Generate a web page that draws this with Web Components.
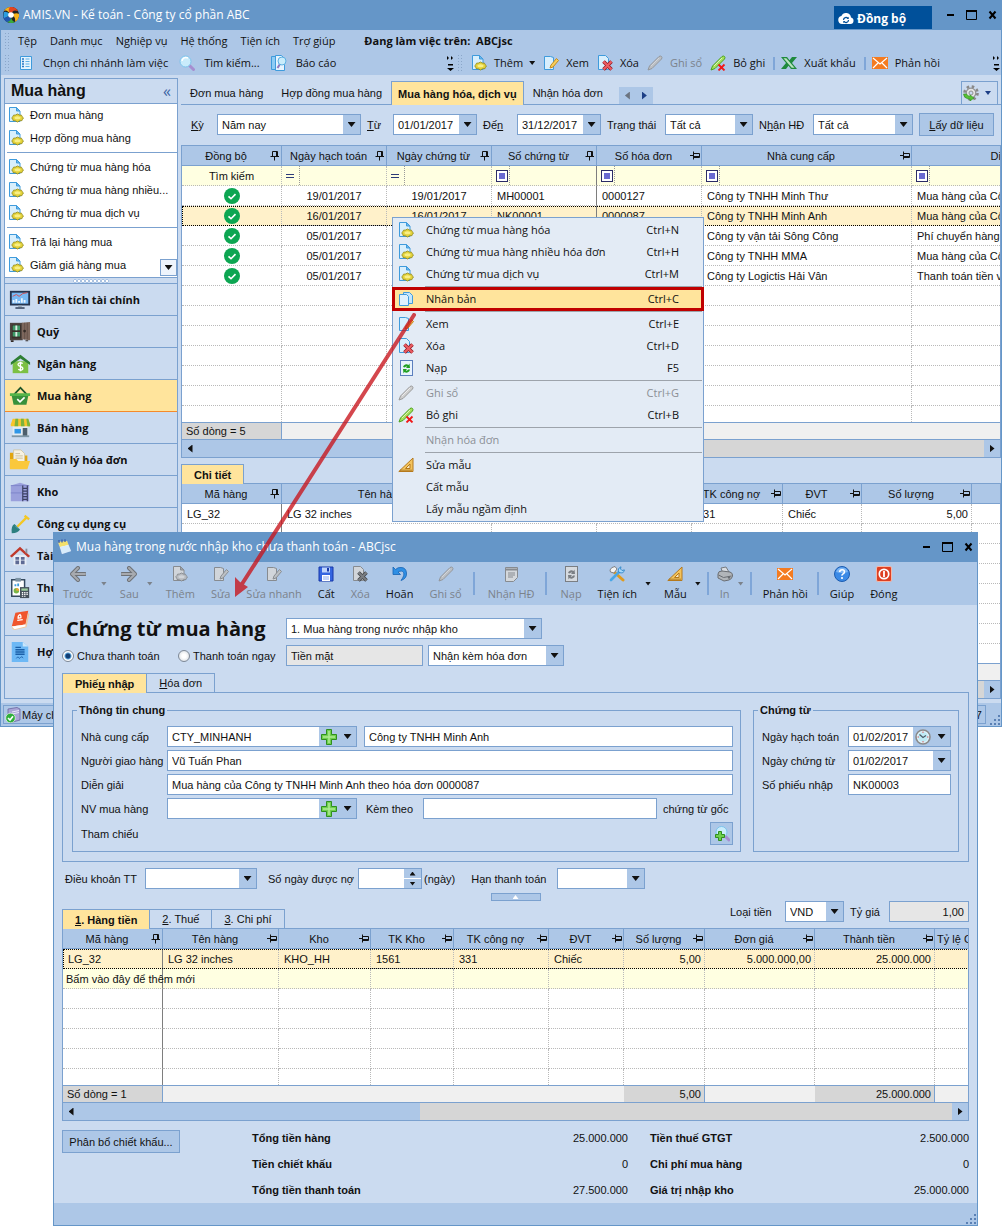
<!DOCTYPE html>
<html lang="vi">
<head>
<meta charset="utf-8">
<title>AMIS.VN - Kế toán</title>
<style>
  :root {
    --title: #6596c8; --bar: #adc7e7; --panel: #cbdbf0; --line: #7ba1cf;
    --gold: #ffe49c; --row: #fff1ca; --soft: #ffffe1; --grey: #d6d6d6; --pale: #f0f0f0;
    --sans: "Liberation Sans", Arial, sans-serif;
    --ui: "Open Sans", "Noto Sans", sans-serif;
  }
  body { margin: 0; background: #fff; color: #111; font: 11px/14px var(--sans); }
</style>
</head>
<body>
<app-desktop></app-desktop>
<script>
const BASE = `
  *, *::before, *::after { box-sizing: border-box; }
  button, input, select { font: inherit; color: inherit; margin: 0; padding: 0; border: 0; background: none; border-radius: 0; text-align: inherit; min-width: 0; }
  [hidden] { display: none !important; }
`;
class UiElement extends HTMLElement {
  connectedCallback() {
    if (this.shadowRoot) return;
    const root = this.attachShadow({ mode: 'open' });
    const t = document.createElement('template');
    t.innerHTML = `<style>${BASE}${this.styles()}</style>${this.render()}`;
    root.append(t.content.cloneNode(true));
  }
  attr(name, fallback = '') { return this.getAttribute(name) ?? fallback; }
  styles() { return ''; }
  render() { return '<slot></slot>'; }
}

/* ---------- icons ---------- */
const PENCIL = (a, b) => `<path d="M1 15l1.500-4L12 1.500q1.500-1 2.500 0t0 2.500L5 13.500z" fill="${a}" stroke="${b}"/><path d="M4 11l8-8" stroke="#fff" stroke-opacity=".6"/>`;
const ICONS = {
  logo: [16, '<circle cx="8" cy="8" r="8" fill="#222"/><path d="M8 8V0a8 8 0 0 0-7 4q3-2 7 4z" fill="#f7b21a"/><path d="M8 8Q9 2 15 4a8 8 0 0 0-8-4q-3 3 1 8z" fill="#e5451f"/><path d="M8 8q5-3 8-1a8 8 0 0 1-4 8Q13 9 8 8z" fill="#f7b21a"/><path d="M8 8q0 6 4 7a8 8 0 0 1-9-1q5 0 5-6z" fill="#3bab3a"/><path d="M8 8q-5 4-8 1a8 8 0 0 0 4 6q5-1 4-7z" fill="#2056b0"/><path d="M8 8Q4 4 1 5a8 8 0 0 0 0 6q3-1 7-3z" fill="#2d9de0"/><circle cx="8" cy="8" r="2.800" fill="#fff"/>'],
  cloud: [16, '<path d="M4 13a4 4 0 0 1-.6-7.900A5 5 0 0 1 13 6.500 3.300 3.300 0 0 1 12.500 13z" fill="#fff"/><path d="M5.500 9a2.500 2.500 0 0 1 4.500-1.500M10.500 9A2.500 2.500 0 0 1 6 10.500" fill="none" stroke="#00509a" stroke-width="1.200"/><path d="M10.700 5.800v2.200H8.500zM5.300 12.200V10h2.200z" fill="#00509a"/>'],
  list: [16, '<path d="M2.500 1.500h11v13h-11z" fill="#e6f4fe" stroke="#3f9bdc"/><path d="M4 4h2M4 6.500h2M4 9h2M4 11.500h2" stroke="#2a78c4" stroke-width="1.500"/><path d="M7.500 4h4M7.500 6.500h4M7.500 9h4M7.500 11.500h4" stroke="#5fb0e6"/>'],
  search: [16, '<path d="M10 10l4.500 4.500" stroke="#a68ed0" stroke-width="3" stroke-linecap="round"/><circle cx="6.500" cy="6.500" r="5.500" fill="#c9ecfb" stroke="#7cc3ec"/><path d="M3 6a4 4 0 0 1 6-3" stroke="#fff" stroke-width="1.500" fill="none"/>'],
  report: [16, '<path d="M.5 1.500h4v13h-4z" fill="#8fccf4" stroke="#3f9bdc"/><path d="M4.500.5h6l3 3v12h-9z" fill="#e6f4fe" stroke="#3f9bdc"/><path d="M9 9l-2.500 4" stroke="#8f79c0" stroke-width="2"/><circle cx="11" cy="6" r="4" fill="#c9ecfb" stroke="#5eb0e2"/>'],
  doc: [16, '<path d="M1.500.5h7l3.500 3.500v10.500h-10.500z" fill="#d8effd" stroke="#3f9bdc"/><path d="M8.500.5v3.500h3.500z" fill="#6cb8ee" stroke="#3f9bdc"/><path d="M9.500 7l1.800 1 2.200.2.500 1.300 1.500 1.400-1 1.400-.5 1.300-2.400.2-2.100 1.200-2.200-1.200-2.300-.3-.3-1.300-1-1.400 1.300-1.300.5-1.300 2-.2z" fill="#e3d23a" stroke="#8f8616" stroke-width=".8"/><ellipse cx="9.500" cy="10.800" rx="3" ry="1.500" fill="#f8ef86"/>'],
  edit: [16, '<path d="M1.500 1.500h6l3 1v12h-9z" fill="#d8effd" stroke="#3f9bdc"/><path d="M8 10l-1 3 3-1 5.500-6.500-2-2z" fill="#f7cf5b" stroke="#c48a1c"/>'],
  del: [16, '<path d="M1.500.5h7l3 3v11h-10z" fill="#d8effd" stroke="#3f9bdc"/><path d="M6.500 6.500l8 8M14.500 6.500l-8 8" stroke="#8f1720" stroke-width="3.600"/><path d="M6.500 6.500l8 8M14.500 6.500l-8 8" stroke="#ec5d62" stroke-width="2.200"/>'],
  pencil: [16, PENCIL('#cfcfcf', '#9a9a9a')],
  unpost: [16, PENCIL('#a5e05a', '#4ba31e') + '<path d="M8.500 9.500l6 6M14.500 9.500l-6 6" stroke="#f01818" stroke-width="1.800"/>'],
  excel: [16, '<path d="M0 2h6l2.500 3.200L11 2h5l-5 6 5 6h-6l-2.500-3.200L5 14H0l5-6z" fill="#1f8a3d"/><path d="M2.500 3.200h2.800l8.200 9.600h-2.800z" fill="#b9e4bf"/>'],
  mail: [16, '<rect y="2" width="16" height="12" fill="#f47b20"/><path d="M1 3l7 6 7-6M1 13l5-5M15 13l-5-5" fill="none" stroke="#fff" stroke-width="1.200"/>'],
  gear: [16, '<circle cx="8" cy="8" r="6.500" fill="none" stroke="#888" stroke-width="2.600" stroke-dasharray="2.500 2.600"/><circle cx="8" cy="8" r="4.800" fill="#e4e4e4" stroke="#909090" stroke-width="1.200"/><circle cx="8" cy="8" r="2" fill="#cbdbf0" stroke="#909090"/><path d="M.5 9q1 5 6.500 5v2l4-3-4-3v1.500Q4.500 11 3.500 9z" fill="#55c234" stroke="#2f8f1e" stroke-width=".6"/>'],
  copy: [16, '<path d="M5.500 1.500h6l3 3v8h-9z" fill="#c4e6fb" stroke="#3f9bdc"/><path d="M1.500 3.500h7l2 2v9h-9z" fill="#dff1fd" stroke="#3f9bdc"/>'],
  refresh: [16, '<rect x="2.500" y=".5" width="12" height="15" fill="#e9f3fd" stroke="#5c7fbe"/><path d="M5 7a3.500 3.500 0 0 1 5.500-2l1-1.500.5 4.500H8l1.200-1.500Q7.500 6 7 7.500zM12 9.500a3.500 3.500 0 0 1-5.500 2.500l-1 1.500L5 9h4l-1.200 1.500q1.700.5 2.200-1z" fill="#22a022"/>'],
  ruler: [16, '<path d="M.8 14.500h14.200V1z" fill="#f3c35c" stroke="#b5791c"/><path d="M7.500 11.500H12V7z" fill="#f7e8c4" stroke="#b5791c"/><path d="M3 14v-1.500M5 14v-1.500M7 14v-1.500M9 14v-1.500M11 14v-1.500M13 14v-1.500" stroke="#7d4b08" stroke-width=".8"/>'],
  left: [16, '<path d="M8 2L2 8l6 6M2.500 8H15" fill="none" stroke="#6d6d6d" stroke-width="4" stroke-linecap="round" stroke-linejoin="round"/><path d="M8 2L2 8l6 6M2.500 8H15" fill="none" stroke="#b4b4b4" stroke-width="2" stroke-linecap="round"/>'],
  right: [16, '<path d="M8 2l6 6-6 6M13.500 8H1" fill="none" stroke="#6d6d6d" stroke-width="4" stroke-linecap="round" stroke-linejoin="round"/><path d="M8 2l6 6-6 6M13.500 8H1" fill="none" stroke="#b4b4b4" stroke-width="2" stroke-linecap="round"/>'],
  save: [16, '<path d="M1 1h14v14H1z" fill="#3465e0" stroke="#1637a8"/><path d="M4 1.500h8v5H4z" fill="#bfd4fb"/><path d="M4 9h8v6H4z" fill="#fff"/><path d="M9 2h2v3.500H9z" fill="#1637a8"/><path d="M5 11h6M5 13h6" stroke="#8aa9f0"/>'],
  undo: [16, '<path d="M1 1v7.500h7.500L6 6q4-2 5.500.5T9 14.500q6-2 5.500-7.500T9 1.500q-3-.5-5.500 2z" fill="#2f8fe4" stroke="#1763b4" stroke-width=".8"/>'],
  lines: [16, '<path d="M2.500 1.500h12v10l-4 4h-8z" fill="#dff1fd" stroke="#3f9bdc"/><path d="M3 3.500h11" stroke="#3f9bdc" stroke-width="2"/><path d="M5 7h7M5 9h7M5 11h5" stroke="#3f9bdc"/>'],
  tools: [16, '<path d="M4 5l10 9" stroke="#e09b1e" stroke-width="3" stroke-linecap="round"/><path d="M1 4q1-3 5-3.500L8 3 5 7 1.500 6z" fill="#f4f4f4" stroke="#777" stroke-width=".9"/><path d="M2 14L10 6" stroke="#4aa7e6" stroke-width="2.600" stroke-linecap="round"/><path d="M10 6.500Q8 2.500 12 .8L11.500 3 13 4.500l2.400-.6Q15 8 10 6.500z" fill="#a5d8fb" stroke="#2f86c8" stroke-width=".9"/>'],
  printer: [16, '<path d="M4 2l5-1 3 5-6 2z" fill="#f3f3f3" stroke="#777"/><path d="M1 8q0-3 4-3l8 1q3 1 2.500 4T12 14l-5 1-6-3z" fill="#c2c2c2" stroke="#666"/><path d="M1.500 9l5 2.500 8-1.500" fill="none" stroke="#666"/><circle cx="12" cy="11.500" r="1.200" fill="#666"/>'],
  help: [16, '<circle cx="8" cy="8" r="7.500" fill="#3b8ae6" stroke="#1c5cb0"/><path d="M2 6a6.300 6.300 0 0 1 12 0q-6 2-12 0z" fill="#7db6f4"/><path d="M5.700 6q0-2.300 2.400-2.300T10.400 6q0 1.200-1.300 1.900T8 9.600" fill="none" stroke="#fff" stroke-width="1.600"/><circle cx="8" cy="12" r="1.100" fill="#fff"/>'],
  power: [16, '<rect x=".5" y=".5" width="15" height="15" rx="1.500" fill="#dd3f22" stroke="#f3b8a8"/><circle cx="8" cy="8" r="4.700" fill="none" stroke="#fff" stroke-width="1.700"/><path d="M8 5v6" stroke="#fff" stroke-width="1.800"/>'],
  plus: [16, '<path d="M5.500.5h5v5h5v5h-5v5h-5v-5h-5v-5h5z" fill="#6fcf4e" stroke="#2f8f1e"/><path d="M8 2v12M2 8h12" stroke="#b0ec94" stroke-width="1.500"/>'],
  clock: [16, '<circle cx="8" cy="8" r="7" fill="#dff3fb" stroke="#8a8a8a" stroke-width="1.600"/><circle cx="8" cy="8" r="5" fill="#bfeaf5"/><path d="M4.500 5.500L8 8.500l3-2" fill="none" stroke="#4a5a66" stroke-width="1.200"/><path d="M8 2.600v1.200M8 12.200v1.200M2.600 8h1.200M12.200 8h1.200" stroke="#e03c3c"/>'],
  find: [16, '<path d="M11 10l4 4" stroke="#a68ed0" stroke-width="3" stroke-linecap="round"/><circle cx="7.500" cy="6" r="5.500" fill="#c9ecfb" stroke="#7cc3ec"/><path d="M4.500 5.500h3v3h3v3h-3v3h-3v-3h-3v-3h3z" fill="#6fcf4e" stroke="#2f8f1e"/>'],
  tick: [16, '<circle cx="8" cy="8" r="8" fill="#0da652"/><path d="M4.500 8.300l2.500 2.400 4.500-4.600" fill="none" stroke="#fff" stroke-width="1.600"/>'],
  note: [16, '<path d="M2 3l9-1 4 10-9 3z" fill="#fff" stroke="#7d9ccc" stroke-width=".7"/><path d="M2 3l9-1 1.500 4L4 8z" fill="#f3e06c"/><path d="M4 8l8.500-2 2.500 6-9 3z" fill="#d9ecfb"/><path d="M3 4V1M6 3.500V.5M9 3V.3" stroke="#3358a8" stroke-width="1.200"/>'],
  server: [16, '<path d="M3 2l9-1.500 3 1.500v11l-9 2.500-3-2z" fill="#a9a4d6" stroke="#6a66a0" stroke-width=".8"/><path d="M7 5l7-1.500M7 7l7-1.500" stroke="#e9e7fa"/><circle cx="5.500" cy="11" r="4.800" fill="#2fae3b" stroke="#fff" stroke-width=".6"/><path d="M3 11l2 2 3-3.800" fill="none" stroke="#fff" stroke-width="1.600"/>'],
  pinv: [10, '<path d="M2.500.5h5v5h-5zM.5 5.500h8.500M4.500 5.500V9.500" fill="none" stroke="#111"/><path d="M6.500 1v4" stroke="#111"/>'],
  pinh: [10, '<path d="M3.500 2.500h6v4h-6zM3.500 .5v8M0 4.500h3.500" fill="none" stroke="#111"/><path d="M4 5.500h5" stroke="#111"/>'],
  grip: [12, '<path d="M9 1h2v2H9zM5 5h2v2H5zM9 5h2v2H9zM1 9h2v2H1zM5 9h2v2H5zM9 9h2v2H9z" fill="#5a80b4"/>'],
  monitor: [24, '<rect x="1" y="2" width="22" height="16" fill="#25344f"/><rect x="3" y="4" width="18" height="12" fill="#79b9f4"/><path d="M4 8l4-2 3 2 4-3 5-1" fill="none" stroke="#d54b4b"/><path d="M4 15v-3h2v3zM7 15v-4h2v4zM10 15v-2h2v2zM13 15v-5h2v5zM16 15v-3h2v3z" fill="#e9f4fd"/><path d="M10 18h4v2h-4z" fill="#9aa8b5"/><path d="M7 20h10v1.500H7z" fill="#25344f"/>'],
  safe: [24, '<path d="M1 2h14v19H1z" fill="#4c4440"/><path d="M3 4h10v15H3z" fill="#3b302b"/><path d="M4 5h8v5H4zM4 12h8v5H4z" fill="#3f9a68"/><path d="M7 5h2v5H7zM7 12h2v5H7z" fill="#dfeee5"/><path d="M14 2l9-1v20l-9-1z" fill="#7d675d"/><path d="M17 2v18M20 2v18" stroke="#66524a"/><circle cx="17" cy="11" r="1.500" fill="#332a26"/><path d="M2 21h3v2H2zM18 21h3v1h-3z" fill="#332a26"/>'],
  bank: [24, '<path d="M4 9h17v13H4z" fill="#7cc043"/><path d="M2 10l10.500-8L23 10v3l-10.500-7L2 13z" fill="#2e7f35"/><path d="M15 11.500q-2.500-1.600-4.300-.3t.3 2.900q2.400 1 3.400 1.500 1.500 1.400-.3 2.700-1.900.9-4-.6M12.500 9.500v10.500" fill="none" stroke="#fff" stroke-width="1.500"/>'],
  basket: [24, '<path d="M6 10l6.500-7L19 10" fill="none" stroke="#1d5428" stroke-width="2"/><path d="M1 9h22v3H1z" fill="#55b54a"/><path d="M3 12h18l-2 9.500H5z" fill="#38913c"/><path d="M9 15.500l3 2.800 5-4.800" fill="none" stroke="#fff" stroke-width="1.800"/>'],
  shop: [24, '<path d="M4 9h17v12H4z" fill="#e3ecf2"/><path d="M4 2h17l2 6v2H2V8z" fill="#f8c52c"/><path d="M7 2h3v8H6zM13 2h3l1 8h-4zM19 2h2l2 6v2h-3z" fill="#7cb33c"/><path d="M6 13h7v5H6z" fill="#2f97e8"/><path d="M15 12h5v9h-5z" fill="#4d5f6d"/><path d="M3 20h19v2H3z" fill="#7e96a6"/>'],
  folder: [24, '<path d="M1 4h6l2 3h11v14H1z" fill="#e2a60f"/><path d="M5 1h8l4 4v9H5z" fill="#f7f2e2" stroke="#d3c8a4"/><path d="M7 5h5M7 7.500h8M7 10h8" stroke="#c8bd9a"/><path d="M1 22V11h7l2 2h13l-3 9z" fill="#fac83c"/>'],
  depot: [24, '<path d="M2 5l10-3 10 3v17H2z" fill="#9aa0dc"/><path d="M2 5h20M2 13h13" stroke="#7d84c8"/><path d="M15 5v17M20 5v17M15 8h5M15 11h5M15 14h5M15 17h5M15 20h5" stroke="#3c4164" stroke-width="1.300"/>'],
  shovel: [24, '<path d="M9 15L19 5" stroke="#f4c724" stroke-width="2.500"/><path d="M17 3l5 4" stroke="#f4c724" stroke-width="2.500"/><path d="M6 12l6 6q-2 4-9 4-1-8 3-10z" fill="#2c7f80"/><path d="M7 14l3 3" stroke="#6fb6b4"/>'],
  house: [24, '<path d="M5 11h14v11H5z" fill="#e9eef6"/><path d="M12 2l11 10-2 1.500L12 5.500 3 13.500 1 12z" fill="#c0392b"/><path d="M18 4h2v5h-2z" fill="#8b8f9f"/><path d="M7 13h4v3H7zM7 17h4v4H7zM13 13h4v3h-4zM13 17h4v4h-4z" fill="#5d6a94"/>'],
  calc: [24, '<path d="M3 3h14v18H3z" fill="#fff" stroke="#34495e" stroke-width="1.600"/><path d="M7 1h6v4H7z" fill="#7c92a3"/><circle cx="8" cy="15" r="3" fill="#7ab648"/><path d="M8 12v3h3a3 3 0 0 0-3-3z" fill="#f3a536"/><path d="M6 8h2v2H6zM9 7h2v3H9z" fill="#3f9bdc"/><path d="M12 11h10v12H12z" fill="#46515c"/><path d="M13.500 12.500h7v2.500h-7z" fill="#9fd0a0"/><path d="M14 17h1.500M16.500 17H18M19 17h1.500M14 19h1.500M16.500 19H18M19 19h1.500M14 21h1.500M16.500 21H18" stroke="#fff" stroke-width="1.300"/>'],
  book: [24, '<path d="M7 4l14-2-3 15-15 2z" fill="#f0562d"/><path d="M3 19l15-2 3-13 1 2-3 14-13 3q-3-1-3-4z" fill="#f5c79a"/><path d="M3 19l15-2v2L6 22z" fill="#fff"/><path d="M9 12.500l6-1M10 10q-.5-3 2-4 1.500 1.500 1 3.500z" stroke="#fff" fill="none" stroke-width="1.400"/>'],
  contract: [24, '<path d="M3 1h12l6 5v17H3z" fill="#6db8f5"/><path d="M15 1v5h6z" fill="#c9e6fc"/><path d="M7 7h6M7 9.500h10M7 12h10M7 14.500h10" stroke="#1b5fa8" stroke-width="1.500"/><path d="M8 19q2-3 2.500-1t2 0 3 .5" fill="none" stroke="#1b5fa8"/>'],
};
customElements.define('app-icon', class extends UiElement {
  styles() {
    const s = this.attr('size', '16');
    return `:host{display:block;flex:none;width:${s}px;height:${s}px} :host([muted]){filter:grayscale(1) brightness(.92);opacity:.85} svg{display:block;width:100%;height:100%}`;
  }
  render() {
    const [box, art] = ICONS[this.attr('name')];
    return `<svg viewBox="0 0 ${box} ${box}" aria-hidden="true">${art}</svg>`;
  }
});
customElements.define('drop-caret', class extends UiElement {
  styles() {
    return `:host{display:block;flex:none;width:8px;height:5px;background:currentColor;clip-path:polygon(0 0,100% 0,50% 100%)}
      :host([dir=left]){width:5px;height:8px;clip-path:polygon(100% 0,100% 100%,0 50%)}
      :host([dir=right]){width:5px;height:8px;clip-path:polygon(0 0,0 100%,100% 50%)}
      :host([small]){width:6px;height:4px}
      :host([dir=up]){clip-path:polygon(0 100%,100% 100%,50% 0)}`;
  }
  render() { return ''; }
});

/* ---------- window frame ---------- */
customElements.define('app-window', class extends UiElement {
  styles() {
    return `:host{display:flex;flex-direction:column;background:var(--panel);border:1px solid var(--title);border-top:0}
      header{display:flex;align-items:center;height:30px;background:var(--title);color:#fff;font:12px/16px var(--ui);padding:0 3px 0 2px}
      h2{font:inherit;margin:0 auto 0 4px;white-space:nowrap}
      .ctl{display:flex;align-items:center;gap:10px;color:#000}
      .ctl button{width:11px;height:12px;display:flex}
      svg{display:block}`;
  }
  render() {
    return `<header><app-icon name="${this.attr('icon')}"></app-icon><h2>${this.attr('heading')}</h2><slot name="action"></slot>
      <div class="ctl">
        <button aria-label="Thu nhỏ"><svg width="11" height="12"><path d="M2 5h7v2H2z"/></svg></button>
        <button aria-label="Phóng to"><svg width="11" height="12"><path d="M.5 1.500h10v9H.5z" fill="none" stroke="#000"/><path d="M0 1h11v2H0z"/></svg></button>
        <button aria-label="Đóng"><svg width="11" height="12"><path d="M2.500 2.500l6 7M8.500 2.500l-6 7" stroke="#000" stroke-width="2"/></svg></button>
      </div></header><slot></slot>`;
  }
});
customElements.define('sync-button', class extends UiElement {
  styles() { return `:host{display:block;margin:6px 13px 0 0;align-self:flex-start} button{display:flex;align-items:center;gap:3px;width:98px;height:23px;padding:2px 4px 0;background:#00509a;color:#fff;font:bold 12px/16px var(--ui);white-space:nowrap}`; }
  render() { return `<button><app-icon name="cloud"></app-icon>Đồng bộ</button>`; }
});

/* ---------- toolbars ---------- */
customElements.define('tool-button', class extends UiElement {
  styles() {
    return `:host{display:flex;align-items:center}
      button{display:flex;align-items:center;gap:var(--icon-gap,7px);font:11px/16px var(--ui);white-space:nowrap}
      drop-caret{margin-left:6px}
      :host([disabled]){color:#7b828b}
      :host([stacked]) button{flex-direction:column;gap:4px;padding:0 8px}
      :host([stacked]) app-icon{margin:0 -4px}
      :host([stacked]) drop-caret{margin:0 5px 0 0}`;
  }
  render() {
    const off = this.hasAttribute('disabled');
    return `<button ${off ? 'disabled' : ''}><app-icon name="${this.attr('icon')}" ${off ? 'muted' : ''}></app-icon><slot></slot></button>${this.hasAttribute('menu') ? '<drop-caret small></drop-caret>' : ''}`;
  }
});
customElements.define('tool-sep', class extends UiElement {
  styles() { return `:host{display:block;width:2px;height:13px;background:#7fa6d8} :host([tall]){height:23px;margin:0 5px 0 3px} :host([tight]){height:23px;margin:0 3px 0 1px}`; }
  render() { return ''; }
});
customElements.define('bar-grip', class extends UiElement {
  styles() { return `:host{display:block;width:6px;height:18px;background:radial-gradient(circle,#8aa6c9 1px,transparent 1px) 0 0/3px 3px}`; }
  render() { return ''; }
});
customElements.define('bar-more', class extends UiElement {
  styles() { return `button{display:block}svg{display:block}`; }
  render() { return `<button aria-label="Thêm nút"><svg width="8" height="18"><path d="M1 2l2 2-2 2zM5 2l2 2-2 2zM2 10h5v1.500H2zM1 14h7l-3.500 3z"/></svg></button>`; }
});
customElements.define('main-menu', class extends UiElement {
  styles() {
    return `:host{display:block;background:var(--bar);font:11px/16px var(--ui)}
      nav{display:flex;align-items:center;height:22px;padding-left:3px}
      nav a{color:inherit;text-decoration:none;white-space:nowrap;margin-left:13px}
      bar-grip + a{margin-left:8px}
      b{margin-left:29px;white-space:pre}
      .row{display:flex;align-items:center;height:22px;padding-bottom:1px;box-sizing:content-box}
      .part{display:flex;align-items:center;gap:8px;padding-left:3px}
      .part:first-child{flex:0 0 453px;gap:11px;--icon-gap:9px} .part:first-child bar-grip{margin-right:-3px}
      .part:last-child{flex:1}
      .push{margin-left:auto} .part:last-child .push{margin-right:1px}
      tool-sep{margin-right:-2px}`;
  }
  render() {
    return `<nav><bar-grip></bar-grip>${['Tệp', 'Danh mục', 'Nghiệp vụ', 'Hệ thống', 'Tiện ích', 'Trợ giúp'].map(t => `<a href="#">${t}</a>`).join('')}<b>Đang làm việc trên:  ABCjsc</b></nav>
      <div class="row"><div class="part"><bar-grip></bar-grip>
        <tool-button icon="list">Chọn chi nhánh làm việc</tool-button><tool-button icon="search">Tìm kiếm...</tool-button><tool-button icon="report">Báo cáo</tool-button><bar-more class="push"></bar-more></div>
      <div class="part"><bar-grip></bar-grip>
        <tool-button icon="doc" menu>Thêm</tool-button><tool-button icon="edit">Xem</tool-button><tool-button icon="del">Xóa</tool-button><tool-button icon="pencil" disabled>Ghi sổ</tool-button><tool-button icon="unpost">Bỏ ghi</tool-button><tool-sep></tool-sep>
        <tool-button icon="excel">Xuất khẩu</tool-button><tool-sep></tool-sep><tool-button icon="mail">Phản hồi</tool-button><bar-more class="push"></bar-more></div></div>`;
  }
});

/* ---------- sidebar ---------- */
customElements.define('side-bar', class extends UiElement {
  styles() {
    return `:host{display:flex;flex-direction:column;width:174px;flex:none;border:1px solid var(--line)}
      header{display:flex;align-items:center;justify-content:space-between;height:25px;padding:0 6px;border-bottom:1px solid var(--line)}
      h1{font:bold 16px/20px var(--sans);margin:0}
      header button{font:16px/16px var(--ui);color:#3d66a5;height:18px}
      .list{position:relative;background:#fff;border-bottom:1px solid var(--line)}
      .list a{display:flex;align-items:center;gap:6px;height:23px;padding:0 0 1px 3px;color:inherit;text-decoration:none;white-space:nowrap}
      hr{margin:2px 0 3px 2px;border:0;border-top:1px solid var(--line)}
      .more{position:absolute;right:0;bottom:1px;width:17px;height:17px;display:grid;place-items:center;background:#eef4fc;border:1px solid var(--line)}
      .split{height:6px;border-bottom:1px solid var(--line);background:radial-gradient(circle,#fff 1px,#7ba1cf 1px,transparent 2px) center/4px 4px repeat-x content-box;padding:0 68px}
      .mods a{display:flex;align-items:center;gap:6px;height:32px;padding-left:4px;border-bottom:1px solid var(--line);color:inherit;text-decoration:none;font:bold 11px/16px var(--ui);white-space:nowrap}
      .mods a.on{background:var(--gold);border-bottom-color:#f58a2c}`;
  }
  render() {
    const link = t => t ? `<a href="#"><app-icon name="doc"></app-icon>${t}</a>` : '<hr>';
    const mods = [['monitor', 'Phân tích tài chính'], ['safe', 'Quỹ'], ['bank', 'Ngân hàng'], ['basket', 'Mua hàng'], ['shop', 'Bán hàng'], ['folder', 'Quản lý hóa đơn'], ['depot', 'Kho'], ['shovel', 'Công cụ dụng cụ'], ['house', 'Tài sản'], ['calc', 'Thuế'], ['book', 'Tổng'], ['contract', 'Hợp']];
    return `<header><h1>Mua hàng</h1><button aria-label="Thu gọn">«</button></header>
      <div class="list">${['Đơn mua hàng', 'Hợp đồng mua hàng', '', 'Chứng từ mua hàng hóa', 'Chứng từ mua hàng nhiều...', 'Chứng từ mua dịch vụ', '', 'Trả lại hàng mua', 'Giảm giá hàng mua'].map(link).join('')}
        <button class="more" aria-label="Cuộn xuống"><drop-caret></drop-caret></button></div>
      <div class="split"></div>
      <nav class="mods">${mods.map(([i, t]) => `<a href="#" class="${t === 'Mua hàng' ? 'on' : ''}"><app-icon name="${i}" size="22"></app-icon>${t}</a>`).join('')}</nav>`;
  }
});

/* ---------- tabs ---------- */
customElements.define('tab-strip', class extends UiElement {
  styles() {
    return `:host{display:flex;position:relative;z-index:1;margin-bottom:-1px}
      :host([plain]){margin:0;border-bottom:1px solid var(--line)}`;
  }
});
customElements.define('tab-item', class extends UiElement {
  styles() {
    return `:host{display:block}
      button{display:block;height:20px;padding:0 12px;border:1px solid var(--line);border-left:0;background:var(--panel);white-space:nowrap}
      :host([selected]) button{background:var(--gold);border-left:1px solid var(--line);border-bottom:0;font-weight:bold}
      :host([plain]) button{height:23px;border:0;padding:0 9px}
      :host([plain][selected]){margin-bottom:-1px}
      :host([plain][selected]) button{height:24px;border:1px solid var(--line);border-bottom:0;padding:0 6px}`;
  }
  render() { return `<button role="tab" aria-selected="${this.hasAttribute('selected')}"><slot></slot></button>`; }
});

/* ---------- form controls ---------- */
customElements.define('form-field', class extends UiElement {
  styles() {
    return `:host{display:flex;align-items:center;min-width:0}
      label{flex:0 0 var(--label,auto);white-space:nowrap}
      .box{display:flex;align-items:stretch;flex:1 0 0;height:21px;min-width:0;border:1px solid var(--line);background:#fff}
      :host([width]) .box{flex:0 0 ${this.attr('width', '100')}px}
      .box.off{background:#e6e6e6}
      input{flex:1;width:0;padding:0 4px}
      .num input{text-align:right}
      .pick{display:grid;flex:1}
      .pick > *{grid-area:1/1}
      select{appearance:none;width:100%;padding:0 20px 0 4px;outline:0}
      .pick i{justify-self:end;width:17px;background:var(--bar);display:grid;place-items:center;pointer-events:none}
      .box > button{width:17px;background:var(--bar);display:grid;place-items:center;flex:none}
      .box > button.wide{width:20px}
      .spin{display:flex;flex-direction:column;width:17px;gap:1px}
      .spin button{flex:1;background:var(--bar);display:grid;place-items:center}`;
  }
  render() {
    const kind = this.attr('kind', 'text'), v = this.attr('value'), name = this.attr('name');
    const input = `<input id="f" value="${v}" ${name ? `aria-label="${name}"` : ''} ${this.hasAttribute('off') ? 'readonly' : ''}>`;
    const drop = '<button aria-label="Mở danh sách"><drop-caret></drop-caret></button>';
    const inner = {
      text: input,
      select: `<span class="pick"><select id="f" ${name ? `aria-label="${name}"` : ''}><option>${v}</option></select><i><drop-caret></drop-caret></i></span>`,
      date: input + drop,
      stamp: input + '<button class="wide" aria-label="Giờ"><app-icon name="clock"></app-icon></button>' + drop,
      lookup: input + '<button class="wide" aria-label="Thêm mới"><app-icon name="plus"></app-icon></button>' + drop,
      spin: input + '<span class="spin"><button aria-label="Tăng"><drop-caret dir="up" small></drop-caret></button><button aria-label="Giảm"><drop-caret small></drop-caret></button></span>',
    }[kind];
    const cls = (this.hasAttribute('off') ? ' off' : '') + (this.hasAttribute('num') ? ' num' : '');
    return `${name ? '' : '<label for="f"><slot></slot></label>'}<div class="box${cls}">${inner}</div>`;
  }
});
customElements.define('push-button', class extends UiElement {
  styles() { return `:host{display:block} button{display:grid;place-items:center;height:23px;min-width:23px;padding:0 6px;width:100%;border:1px solid var(--line);background:var(--bar);white-space:nowrap} :host([square]) button{padding:0}`; }
  render() { return `<button ${this.attr('name') ? `aria-label="${this.attr('name')}"` : ''}><slot></slot></button>`; }
});
customElements.define('group-box', class extends UiElement {
  styles() {
    return `:host{display:flex;min-width:0}
      fieldset{flex:1;min-width:0;margin:0;border:1px solid var(--line);padding:9px 7px 6px 8px}
      legend{font-weight:bold;line-height:14px;margin-left:-4px;padding:0 2px}
      .rows{display:grid;gap:3px;--label:86px}`;
  }
  render() { return `<fieldset><legend>${this.attr('heading')}</legend><div class="rows"><slot></slot></div></fieldset>`; }
});

/* ---------- data grid ---------- */
customElements.define('data-grid', class extends UiElement {
  styles() {
    return `:host{display:block;border:1px solid var(--line);background:#fff;min-width:0}
      .view{overflow:hidden}
      table{table-layout:fixed;border-collapse:separate;border-spacing:0;width:max(100%,${this.total}px)}
      th,td{padding:0;height:20px;white-space:nowrap;font-weight:normal;line-height:14px}
      th{background:var(--bar);border-right:1px solid var(--line);border-bottom:1px solid var(--line)}
      .h{display:flex;align-items:center;padding:0 1px 0 0} .h span{flex:1;text-align:center;overflow:hidden} .h.start span{text-align:left;padding-left:2px}
      tbody td{border-right:1px dotted #b9b9b9;border-bottom:1px dotted #b9b9b9}
      tbody td.solid{border-right:1px solid #7e7e7e}
      td.l{text-align:left;padding-left:5px} td.r{text-align:right;padding-right:3px} td.c{text-align:center}
      td.c app-icon{margin:0 auto}
      tr.soft{background:var(--soft)} tr.soft td.l{padding-left:3px}
      tr.on{background:var(--row);outline:1px dotted #000;outline-offset:-1px}
      tr.last td{height:var(--tail,16px);border-bottom:0}
      .op{display:flex;align-items:center;height:19px;width:18px;padding-left:4px;border-right:1px dotted #999}
      .op.eq::before{content:"";width:8px;height:4px;border:solid #2c3a78;border-width:1px 0}
      .op.any::before{content:"";width:12px;height:12px;border:1px solid #2b2b66;background:#6a6ad0;box-shadow:inset 0 0 0 2px #fff}
      tfoot td{height:18px;background:var(--pale);border-top:1px solid var(--line);border-bottom:1px solid var(--line)}
      tfoot td.g{background:var(--grey);border-right:1px solid var(--line)}
      tfoot td:first-child{text-align:left;padding-left:4px}
      .bar{display:flex;height:17px;background:var(--grey)}
      .bar button{width:16px;background:var(--bar);display:grid;place-items:center}
      .thumb{background:var(--bar);width:var(--thumb,30%)} .bar button:last-child{margin-left:auto}`;
  }
  get total() { return this.data.cols.reduce((a, c) => a + c.w, 0); }
  get data() { return GRIDS[this.attr('source')]; }
  render() {
    const { cols, find, rows, foot, blanks } = this.data;
    const edge = c => c.solid ? ' solid' : '';
    const cell = (v, c) => `<td class="${c.a || 'l'}${edge(c)}">${v === '✓' ? '<app-icon name="tick"></app-icon>' : v}</td>`;
    const line = (r, cls = '') => `<tr class="${cls}">${cols.map((c, i) => cell(r[i] ?? '', c)).join('')}</tr>`;
    return `<div class="view"><table>
      <colgroup>${cols.map((c, i) => `<col ${i < cols.length - 1 ? `style="width:${c.w}px"` : ''}>`).join('')}</colgroup>
      <thead><tr>${cols.map(c => `<th scope="col"><div class="h ${c.start ? 'start' : ''}"><span>${c.t}</span>${c.pin ? `<app-icon name="pin${c.pin}" size="10"></app-icon>` : ''}</div></th>`).join('')}</tr></thead>
      <tbody>${find ? `<tr class="soft">${cols.map((c, i) => i ? `<td class="${edge(c)}"><div class="op ${find[i]}"></div></td>` : `<td class="c">${find[0]}</td>`).join('')}</tr>` : ''}
      ${rows.map(r => line(r.v, r.k)).join('')}${Array.from({ length: blanks }, (_, i) => line([], i === blanks - 1 ? 'last' : '')).join('')}</tbody>
      <tfoot><tr>${cols.map((c, i) => `<td class="${c.a || 'l'} ${foot[i] ? 'g' : ''}">${foot[i] || ''}</td>`).join('')}</tr></tfoot></table></div>
      <div class="bar"><button aria-label="Cuộn trái"><drop-caret dir="left"></drop-caret></button><div class="thumb"></div><button aria-label="Cuộn phải"><drop-caret dir="right"></drop-caret></button></div>`;
  }
});
const GRIDS = {
  vouchers: {
    cols: [{ t: 'Đồng bộ', w: 100, pin: 'v', a: 'c' }, { t: 'Ngày hạch toán', w: 105, pin: 'v', a: 'c' }, { t: 'Ngày chứng từ', w: 105, pin: 'v', a: 'c' }, { t: 'Số chứng từ', w: 105, pin: 'v', solid: 1 }, { t: 'Số hóa đơn', w: 105, pin: 'h' }, { t: 'Nhà cung cấp', w: 210, pin: 'h' }, { t: 'Diễn giải', w: 212, pin: 'h' }],
    find: ['Tìm kiếm', 'eq', 'eq', 'any', 'any', 'any', 'any'],
    rows: [
      { v: ['✓', '19/01/2017', '19/01/2017', 'MH00001', '0000127', 'Công ty TNHH Minh Thư', 'Mua hàng của Công ty TNHH Minh Thư'] },
      { k: 'on', v: ['✓', '16/01/2017', '16/01/2017', 'NK00001', '0000087', 'Công ty TNHH Minh Anh', 'Mua hàng của Công ty TNHH Minh Anh'] },
      { v: ['✓', '05/01/2017', '', '', '', 'Công ty vận tải Sông Công', 'Phí chuyển hàng'] },
      { v: ['✓', '05/01/2017', '', '', '', 'Công ty TNHH MMA', 'Mua hàng của Công ty TNHH MMA'] },
      { v: ['✓', '05/01/2017', '', '', '', 'Công ty Logictis Hải Vân', 'Thanh toán tiền vận chuyển'] },
    ],
    blanks: 7, foot: ['Số dòng = 5'],
  },
  detail: {
    cols: [{ t: 'Mã hàng', w: 100, pin: 'v', solid: 1 }, { t: 'Tên hàng', w: 210, pin: 'h' }, { t: '', w: 105 }, { t: '', w: 95 }, { t: 'TK công nợ', w: 91, pin: 'h' }, { t: 'ĐVT', w: 79, pin: 'h' }, { t: 'Số lượng', w: 110, pin: 'h', a: 'r' }, { t: '', w: 60 }],
    rows: [{ v: ['LG_32', 'LG 32 inches', '', '', '331', 'Chiếc', '5,00'] }],
    blanks: 7, foot: [],
  },
  items: {
    cols: [{ t: 'Mã hàng', w: 100, pin: 'v', solid: 1 }, { t: 'Tên hàng', w: 116, pin: 'h' }, { t: 'Kho', w: 92, pin: 'h' }, { t: 'TK Kho', w: 83, pin: 'h' }, { t: 'TK công nợ', w: 95, pin: 'h' }, { t: 'ĐVT', w: 75, pin: 'h' }, { t: 'Số lượng', w: 81, pin: 'h', a: 'r' }, { t: 'Đơn giá', w: 110, pin: 'h', a: 'r' }, { t: 'Thành tiền', w: 120, pin: 'h', a: 'r' }, { t: 'Tỷ lệ CK', w: 70, start: 1 }],
    rows: [{ k: 'on', v: ['LG_32', 'LG 32 inches', 'KHO_HH', '1561', '331', 'Chiếc', '5,00', '5.000.000,00', '25.000.000'] }, { k: 'soft', v: ['Bấm vào đây để thêm mới'] }],
    blanks: 5, foot: ['Số dòng = 1', '', '', '', '', '', '5,00', '', '25.000.000'],
  },
};

/* ---------- purchase workspace ---------- */
customElements.define('work-area', class extends UiElement {
  styles() {
    return `:host{display:flex;flex-direction:column;flex:1;min-width:0}
      .filters{display:flex;align-items:center;gap:6px;padding:8px 7px 9px 10px}
      .w26{--label:26px}.w34{--label:34px}.w58{--label:58px}.w54{--label:54px}
      push-button{width:75px}
      .pager{display:flex;align-items:center;justify-content:space-around;align-self:flex-end;width:34px;height:17px;margin-left:7px;background:var(--bar);color:#1d3f86}
      .pager button{display:grid} .pager button:first-child{color:#6b7480}
      .gear{display:flex;align-items:center;gap:6px;height:23px;padding:0 6px 0 1px;margin:0 3px 0 auto;border:1px solid var(--line);border-bottom:0;color:#1d3f86}
      .top{padding-top:6px}
      .low{margin-top:6px;display:flex}
      .a{--thumb:38%} .b{--thumb:50%;--tail:19px}`;
  }
  render() {
    return `<div class="top"><tab-strip plain><tab-item plain>Đơn mua hàng</tab-item><tab-item plain>Hợp đồng mua hàng</tab-item><tab-item plain selected>Mua hàng hóa, dịch vụ</tab-item><tab-item plain>Nhận hóa đơn</tab-item>
        <span class="pager"><button aria-label="Trước"><drop-caret dir="left"></drop-caret></button><button aria-label="Sau"><drop-caret dir="right"></drop-caret></button></span>
        <button class="gear" aria-label="Thiết lập"><app-icon name="gear"></app-icon><drop-caret small></drop-caret></button></tab-strip></div>
      <div class="filters">
        <form-field class="w26" kind="select" width="144" value="Năm nay"><u>K</u>ỳ</form-field>
        <form-field class="w26" kind="date" width="84" value="01/01/2017"><u>T</u>ừ</form-field>
        <form-field class="w34" kind="date" width="84" value="31/12/2017">Đế<u>n</u></form-field>
        <form-field class="w58" kind="select" width="88" value="Tất cả">Trạn<u>g</u> thái</form-field>
        <form-field class="w54" kind="select" width="100" value="Tất cả">N<u>h</u>ận HĐ</form-field>
        <push-button><span><u>L</u>ấy dữ liệu</span></push-button></div>
      <data-grid class="a" source="vouchers"></data-grid>
      <div class="low"><tab-strip><tab-item selected>Chi tiết</tab-item></tab-strip></div>
      <data-grid class="b" source="detail"></data-grid>`;
  }
});
customElements.define('status-bar', class extends UiElement {
  styles() {
    return `:host{display:flex;align-items:center;justify-content:space-between;height:23px;background:var(--bar);padding:0 0 0 2px}
      .cell{display:flex;align-items:center;gap:1px;flex:1;height:19px;border:1px solid var(--line);padding:0 3px 0 1px;margin-right:3px;white-space:nowrap} .cell span{margin-right:auto}
      app-icon.grip{align-self:flex-end}`;
  }
  render() { return `<div class="cell"><app-icon name="server"></app-icon><span>Máy chủ</span><time>01/02/2017</time></div><app-icon class="grip" name="grip" size="12"></app-icon>`; }
});

/* ---------- context menu ---------- */
customElements.define('context-menu', class extends UiElement {
  styles() {
    return `:host{display:block;width:312px;background:#e3ebf5;border:1px solid var(--line);padding:1px 0;font:11px/16px var(--ui)}
      button{display:flex;align-items:center;width:100%;height:22px;padding:0 24px 0 5px}
      .ic{width:16px;margin-right:12px} kbd{font:inherit;margin-left:auto}
      button:disabled{color:#8b8f96}
      hr{margin:1px 1px 1px 32px;border:0;border-top:1px solid #9da3ab}
      .hit{background:var(--gold);outline:3px solid #c00000;outline-offset:-2px}`;
  }
  render() {
    const items = [['doc', 'Chứng từ mua hàng hóa', 'Ctrl+N'], ['doc', 'Chứng từ mua hàng nhiều hóa đơn', 'Ctrl+H'], ['doc', 'Chứng từ mua dịch vụ', 'Ctrl+M'], 0, ['copy', 'Nhân bản', 'Ctrl+C', 'hit'], 0, ['edit', 'Xem', 'Ctrl+E'], ['del', 'Xóa', 'Ctrl+D'], ['refresh', 'Nạp', 'F5'], 0, ['pencil', 'Ghi sổ', 'Ctrl+G', 'off'], ['unpost', 'Bỏ ghi', 'Ctrl+B'], 0, ['', 'Nhận hóa đơn', '', 'off'], 0, ['ruler', 'Sửa mẫu'], ['', 'Cất mẫu'], ['', 'Lấy mẫu ngầm định']];
    return items.map(i => i ? `<button role="menuitem" class="${i[3] || ''}" ${i[3] === 'off' ? 'disabled' : ''}><span class="ic">${i[0] ? `<app-icon name="${i[0]}"></app-icon>` : ''}</span><span>${i[1]}</span>${i[2] ? `<kbd>${i[2]}</kbd>` : ''}</button>` : '<hr>').join('');
  }
});

/* ---------- voucher dialog content ---------- */
customElements.define('voucher-form', class extends UiElement {
  styles() {
    return `:host{display:flex;flex-direction:column}
      .tools{display:flex;align-items:center;height:43px;padding-left:1px;background:var(--bar)}
      main{padding:13px 8px 0}
      .head{display:grid;grid-template-columns:224px 1fr;gap:6px 0;margin-bottom:7px}
      h1{font:bold 20px/21px var(--ui);margin:0;padding-left:4px;white-space:nowrap}
      .pay{display:flex;align-items:center} .pay label{display:flex;align-items:center;gap:3px;flex:none;white-space:nowrap} .pay label:first-child{width:116px}
      .pay input{appearance:none;width:12px;height:12px;margin:0;border:1px solid #7d8896;border-radius:50%;background:radial-gradient(circle,#fff 2px,#e2e6ea 5px)}
      .pay input:checked{background:radial-gradient(circle,#123e73 2px,#5aa3da 3px,#fff 4px)}
      .duo{display:flex;gap:5px}
      .panel{display:flex;gap:12px;border:1px solid var(--line);padding:10px 9px 9px}
      .panel group-box:first-child{flex:1} .panel group-box:last-child{flex:0 0 206px}
      .r{display:flex;align-items:center;gap:7px}
      .r > .grow{flex:1} .kt{--label:59px;text-indent:2px}
      .tail{width:70px;margin-left:-1px;white-space:nowrap}
      .ref{justify-content:space-between}
      .terms{display:flex;align-items:center;padding:6px 0 0 3px}
      .l80{--label:80px}.l90{--label:90px;margin-left:11px}.l86{--label:86px;margin-left:16px}.day{margin-left:2px;white-space:nowrap}
      .fold{display:grid;place-items:center;width:50px;height:8px;margin:4px auto 0;border:1px solid var(--line);background:var(--bar);color:#fff}
      .split{display:flex;justify-content:space-between;align-items:flex-end}
      .money{display:flex;gap:6px;padding-bottom:6px}
      .l55{--label:55px}.l39{--label:39px}
      data-grid{--thumb:341px}
      .sum{display:grid;grid-template-columns:190px 376fr 22px 319fr;padding-top:4px}
      .sum push-button{width:118px;margin-top:5px}
      dl{margin:0;display:grid;grid-template-columns:1fr auto;line-height:26px} dl:last-child{grid-column:4} dt{font-weight:bold} dd{margin:0;text-align:right}
      footer{display:flex;justify-content:flex-end;align-items:flex-end;height:22px;background:var(--bar)}`;
  }
  render() {
    const tb = (icon, text, extra = '') => `<tool-button stacked icon="${icon}" ${extra}>${text}</tool-button>`;
    return `<div class="tools">${tb('left', 'Trước', 'disabled menu')}${tb('right', 'Sau', 'disabled menu')}${tb('doc', 'Thêm', 'disabled')}${tb('edit', 'Sửa', 'disabled')}${tb('edit', 'Sửa nhanh', 'disabled')}${tb('save', 'Cất')}${tb('del', 'Xóa', 'disabled')}${tb('undo', 'Hoãn')}${tb('pencil', 'Ghi sổ', 'disabled')}<tool-sep tall></tool-sep>${tb('lines', 'Nhận HĐ', 'disabled')}<tool-sep tall></tool-sep>${tb('refresh', 'Nạp', 'disabled')}${tb('tools', 'Tiện ích', 'menu')}${tb('ruler', 'Mẫu', 'menu')}<tool-sep tight></tool-sep>${tb('printer', 'In', 'disabled menu')}<tool-sep tight></tool-sep>${tb('mail', 'Phản hồi')}<tool-sep tight></tool-sep>${tb('help', 'Giúp')}${tb('power', 'Đóng')}</div>
    <main>
      <div class="head"><h1>Chứng từ mua hàng</h1><form-field kind="select" width="256" name="Loại chứng từ" value="1. Mua hàng trong nước nhập kho"></form-field>
        <div class="pay"><label><input type="radio" name="pay" checked>Chưa thanh toán</label><label><input type="radio" name="pay">Thanh toán ngay</label></div>
        <div class="duo"><form-field width="137" off name="Phương thức" value="Tiền mặt"></form-field><form-field kind="select" width="136" name="Hóa đơn" value="Nhận kèm hóa đơn"></form-field></div></div>
      <tab-strip><tab-item selected>Phiế<u>u</u> nhập</tab-item><tab-item><u>H</u>óa đơn</tab-item></tab-strip>
      <div class="panel">
        <group-box heading="Thông tin chung">
          <div class="r"><form-field kind="lookup" width="190" value="CTY_MINHANH">Nhà cung cấp</form-field><form-field class="grow" name="Tên nhà cung cấp" value="Công ty TNHH Minh Anh"></form-field></div>
          <form-field value="Vũ Tuấn Phan">Người giao hàng</form-field>
          <form-field value="Mua hàng của Công ty TNHH Minh Anh theo hóa đơn 0000087">Diễn giải</form-field>
          <div class="r"><form-field kind="lookup" width="190">NV mua hàng</form-field><form-field class="grow kt">Kèm theo</form-field><span class="tail">chứng từ gốc</span></div>
          <div class="r ref"><span>Tham chiếu</span><push-button square name="Chọn chứng từ tham chiếu"><app-icon name="find"></app-icon></push-button></div>
        </group-box>
        <group-box heading="Chứng từ">
          <form-field kind="stamp" value="01/02/2017">Ngày hạch toán</form-field>
          <form-field kind="date" value="01/02/2017">Ngày chứng từ</form-field>
          <form-field value="NK00003">Số phiếu nhập</form-field>
        </group-box></div>
      <div class="terms"><form-field class="l80" kind="select" width="112">Điều khoản TT</form-field><form-field class="l90" kind="spin" width="64">Số ngày được nợ</form-field><span class="day">(ngày)</span><form-field class="l86" kind="date" width="88">Hạn thanh toán</form-field></div>
      <button class="fold" aria-label="Thu gọn"><drop-caret dir="up" small></drop-caret></button>
      <div class="split"><tab-strip><tab-item selected><u>1</u>. Hàng tiền</tab-item><tab-item><u>2</u>. Thuế</tab-item><tab-item><u>3</u>. Chi phí</tab-item></tab-strip>
        <div class="money"><form-field class="l55" kind="select" width="59" value="VND">Loại tiền</form-field><form-field class="l39" width="80" off num value="1,00">Tỷ giá</form-field></div></div>
      <data-grid source="items"></data-grid>
      <div class="sum"><push-button>Phân bổ chiết khấu...</push-button>
        <dl><dt>Tổng tiền hàng</dt><dd>25.000.000</dd><dt>Tiền chiết khấu</dt><dd>0</dd><dt>Tổng tiền thanh toán</dt><dd>27.500.000</dd></dl>
        <dl><dt>Tiền thuế GTGT</dt><dd>2.500.000</dd><dt>Chi phí mua hàng</dt><dd>0</dd><dt>Giá trị nhập kho</dt><dd>25.000.000</dd></dl></div>
    </main>
    <footer><app-icon name="grip" size="12"></app-icon></footer>`;
  }
});

/* ---------- desktop ---------- */
customElements.define('app-desktop', class extends UiElement {
  styles() {
    return `:host{display:grid;grid-template-columns:minmax(1002px,1fr);align-items:start;position:relative}
      app-window{grid-area:1/1}
      .body{display:flex;gap:3px;padding:0 0 4px 3px} side-bar{margin-top:3px}
      context-menu{position:absolute;left:392px;top:217px}
      .dialog{margin:532px 24px 0 53px;z-index:1}
      .pointer{position:absolute;left:230px;top:310px;z-index:2;pointer-events:none}`;
  }
  render() {
    return `<app-window icon="logo" heading="AMIS.VN - Kế toán - Công ty cổ phần ABC"><sync-button slot="action"></sync-button>
        <main-menu></main-menu><div class="body"><side-bar></side-bar><work-area></work-area></div><status-bar></status-bar></app-window>
      <context-menu role="menu"></context-menu>
      <app-window class="dialog" icon="note" heading="Mua hàng trong nước nhập kho chưa thanh toán - ABCjsc"><voucher-form></voucher-form></app-window>
      <svg class="pointer" width="190" height="290" aria-hidden="true"><g fill="#c8141c" stroke="#c8141c" opacity=".78"><path d="M184 5L12 274" stroke-width="4" stroke-linecap="round"/><path d="M5 287l0-20 5 5 8 5z" stroke="none"/></g></svg>`;
  }
});
</script>
</body>
</html>
